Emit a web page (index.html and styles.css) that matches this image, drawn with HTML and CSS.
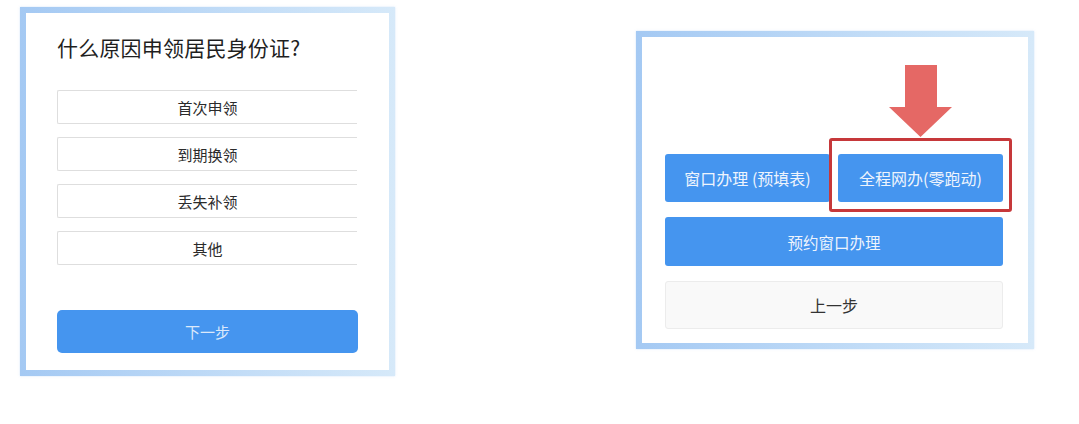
FILE: index.html
```html
<!DOCTYPE html>
<html lang="zh-CN">
<head>
<meta charset="utf-8">
<link rel="stylesheet" href="styles.css">
</head>
<body>
<div class="stage">
  <div class="frame frame-left">
    <div class="inner inner-left">
      <h1 class="title">什么原因申领居民身份证?</h1>
      <div class="options">
        <div class="option">首次申领</div>
        <div class="option">到期换领</div>
        <div class="option">丢失补领</div>
        <div class="option">其他</div>
      </div>
      <div class="btn-next">下一步</div>
    </div>
  </div>
  <div class="frame frame-right">
    <div class="inner inner-right">
      <svg class="arrow" width="63" height="72" viewBox="0 0 63 72">
        <polygon points="16,0 48,0 48,42 63,42 31.5,72 0,42 16,42" fill="#e56865"/>
      </svg>
      <div class="highlight"></div>
      <div class="row">
        <div class="btn-blue">窗口办理 (预填表)</div>
        <div class="btn-blue">全程网办(零跑动)</div>
      </div>
      <div class="btn-blue wide">预约窗口办理</div>
      <div class="btn-prev">上一步</div>
    </div>
  </div>
</div>
</body>
</html>
```
FILE: styles.css
```css
html, body {
  margin: 0;
  padding: 0;
  background: #ffffff;
}
body {
  width: 1079px;
  height: 424px;
  overflow: hidden;
  font-family: "Noto Sans CJK SC", "Noto Sans", sans-serif;
}
.stage {
  display: flex;
  align-items: flex-start;
  padding-left: 20px;
  gap: 241px;
}
.frame {
  padding: 6px;
  background: linear-gradient(90deg, #a4c9f3 0%, #c3ddf7 60%, #d6e9f9 100%);
  box-shadow: 0 0 2px rgba(164, 201, 243, 0.5);
}
.inner {
  background: #ffffff;
}
.frame-left {
  margin-top: 7px;
  width: 363px;
  height: 357px;
}
.inner-left {
  height: 100%;
  box-sizing: border-box;
  padding: 19px 0 0 31px;
}
.title {
  margin: 0;
  font-size: 21px;
  line-height: 30px;
  font-weight: 400;
  color: #1f1f1f;
  letter-spacing: 0.2px;
}
.options {
  margin-top: 28px;
  display: flex;
  flex-direction: column;
  gap: 13px;
}
.option {
  width: 300px;
  height: 34px;
  box-sizing: border-box;
  border: 1px solid #dedede;
  border-right: none;
  border-radius: 2px 0 0 2px;
  display: flex;
  align-items: center;
  justify-content: center;
  font-size: 15px;
  color: #2b2b2b;
}
.btn-next {
  margin-top: 45px;
  width: 301px;
  height: 43px;
  border-radius: 5px;
  background: #4595ef;
  color: #dce9fb;
  font-size: 15px;
  display: flex;
  align-items: center;
  justify-content: center;
}
.frame-right {
  margin-top: 31px;
  width: 386px;
  height: 306px;
}
.inner-right {
  position: relative;
  height: 100%;
  box-sizing: border-box;
  padding: 117px 25px 0 23px;
  display: flex;
  flex-direction: column;
  gap: 15px;
}
.row {
  display: flex;
  gap: 8px;
}
.btn-blue {
  flex: 1;
  height: 48px;
  border-radius: 3px;
  background: #4595ef;
  color: #eef4fd;
  font-size: 16px;
  display: flex;
  align-items: center;
  justify-content: center;
}
.btn-blue.wide {
  flex: none;
  height: 49px;
  font-size: 15.5px;
}
.btn-prev {
  height: 48px;
  box-sizing: border-box;
  border: 1px solid #ececec;
  border-radius: 3px;
  background: #f9f9f9;
  color: #333333;
  font-size: 16px;
  display: flex;
  align-items: center;
  justify-content: center;
}
.arrow {
  position: absolute;
  left: 247px;
  top: 28px;
}
.highlight {
  position: absolute;
  left: 187px;
  top: 101px;
  width: 183px;
  height: 74px;
  box-sizing: border-box;
  border: 3px solid #c6383a;
  border-radius: 3px;
  z-index: 2;
  pointer-events: none;
}
```
